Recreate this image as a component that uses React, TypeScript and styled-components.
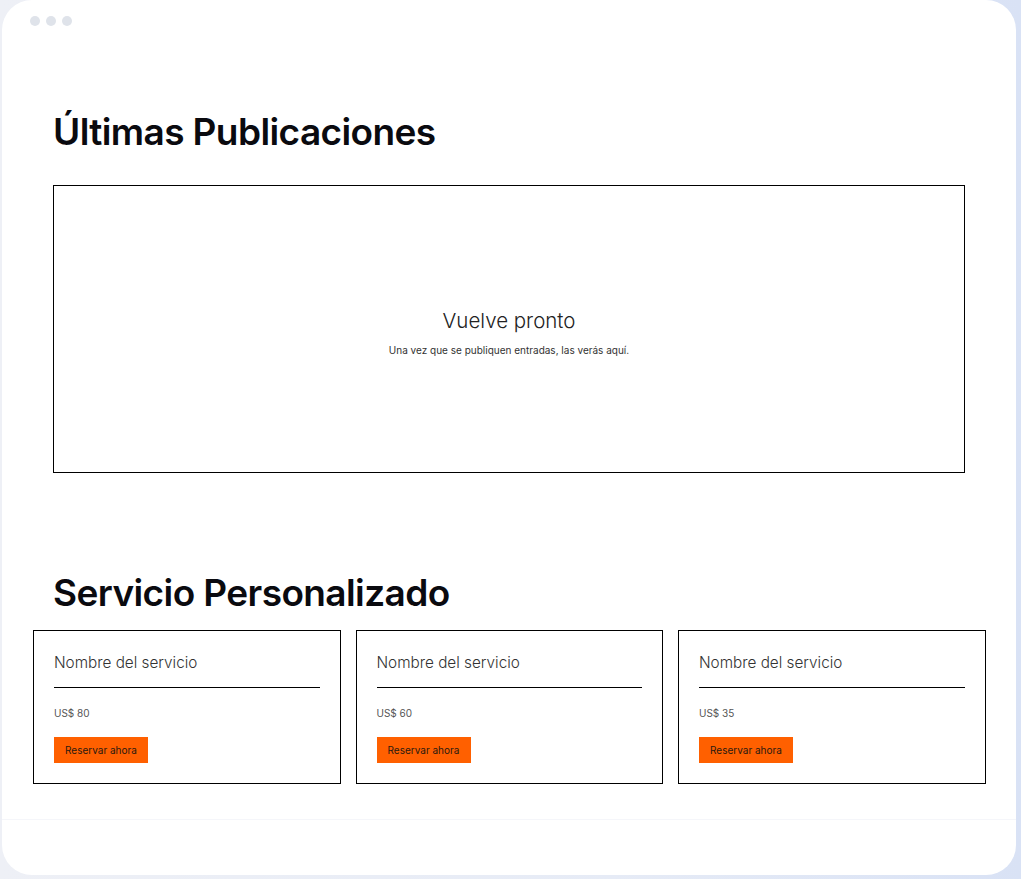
import React from "react";
import styled, { createGlobalStyle } from "styled-components";

const Global = createGlobalStyle`
  html, body { margin: 0; padding: 0; }
  body {
    background: linear-gradient(90deg, #eef0f6 0%, #e6ebf6 60%, #d9e2f5 100%);
    font-family: Inter, "Noto Sans", sans-serif;
    min-height: 879px;
  }
`;

const Frame = styled.div`
  box-sizing: border-box;
  margin-left: 2px;
  width: 1014px;
  height: 875px;
  background: #ffffff;
  border-radius: 30px;
  overflow: hidden;
`;

const TopBar = styled.div`
  display: flex;
  gap: 6px;
  padding: 16px 0 0 28px;
  height: 26px;
  box-sizing: border-box;
`;

const Dot = styled.span`
  width: 10px;
  height: 10px;
  border-radius: 50%;
  background: #dfe3ea;
`;

const Section = styled.section<{ $top: number }>`
  padding: ${(p) => p.$top}px 51px 0 51px;
`;

const Heading = styled.h2`
  margin: 0;
  font-family: Inter, sans-serif;
  font-weight: 600;
  font-size: 37px;
  letter-spacing: -0.6px;
  line-height: 46px;
  color: #0a0a0f;
`;

const EmptyBox = styled.div`
  margin-top: 30px;
  height: 288px;
  border: 1px solid #000;
  box-sizing: border-box;
  display: flex;
  flex-direction: column;
  align-items: center;
  justify-content: center;
  padding-top: 5px;
`;

const EmptyTitle = styled.div`
  font-family: Inter, sans-serif;
  font-weight: 300;
  font-size: 20.5px;
  color: #222;
  line-height: 26px;
`;

const EmptyText = styled.div`
  margin-top: 10px;
  font-family: Inter, sans-serif;
  font-size: 10px;
  color: #333;
`;

const CardRow = styled.div`
  display: grid;
  grid-template-columns: repeat(3, 307.5px);
  column-gap: 15px;
  padding: 14px 0 0 31px;
`;

const Card = styled.div`
  box-sizing: border-box;
  height: 154px;
  border: 1px solid #000;
  padding: 22px 20px 0 20px;
  display: flex;
  flex-direction: column;
`;

const CardTitle = styled.div`
  font-family: Inter, sans-serif;
  font-weight: 300;
  font-size: 15.3px;
  color: #333;
  line-height: 20px;
  padding-bottom: 14px;
  border-bottom: 1px solid #000;
`;

const Price = styled.div`
  margin-top: 18px;
  font-family: Inter, sans-serif;
  font-size: 10px;
  color: #555;
  line-height: 14px;
`;

const Button = styled.button`
  margin-top: 17px;
  align-self: flex-start;
  width: 94px;
  height: 26px;
  border: none;
  background: #ff6000;
  color: #2a1a10;
  font-family: Inter, sans-serif;
  font-size: 10px;
  padding: 0;
  cursor: pointer;
`;

const FooterLine = styled.div`
  margin-top: 35px;
  border-top: 1px solid #f5f6fa;
`;

const services = [
  { name: "Nombre del servicio", price: "US$ 80" },
  { name: "Nombre del servicio", price: "US$ 60" },
  { name: "Nombre del servicio", price: "US$ 35" },
];

export default function App() {
  return (
    <>
      <Global />
      <Frame>
        <TopBar>
          <Dot />
          <Dot />
          <Dot />
        </TopBar>
        <Section $top={83}>
          <Heading>Últimas Publicaciones</Heading>
          <EmptyBox>
            <EmptyTitle>Vuelve pronto</EmptyTitle>
            <EmptyText>Una vez que se publiquen entradas, las verás aquí.</EmptyText>
          </EmptyBox>
        </Section>
        <Section $top={97}>
          <Heading>Servicio Personalizado</Heading>
        </Section>
        <CardRow>
          {services.map((s, i) => (
            <Card key={i}>
              <CardTitle>{s.name}</CardTitle>
              <Price>{s.price}</Price>
              <Button>Reservar ahora</Button>
            </Card>
          ))}
        </CardRow>
        <FooterLine />
      </Frame>
    </>
  );
}
